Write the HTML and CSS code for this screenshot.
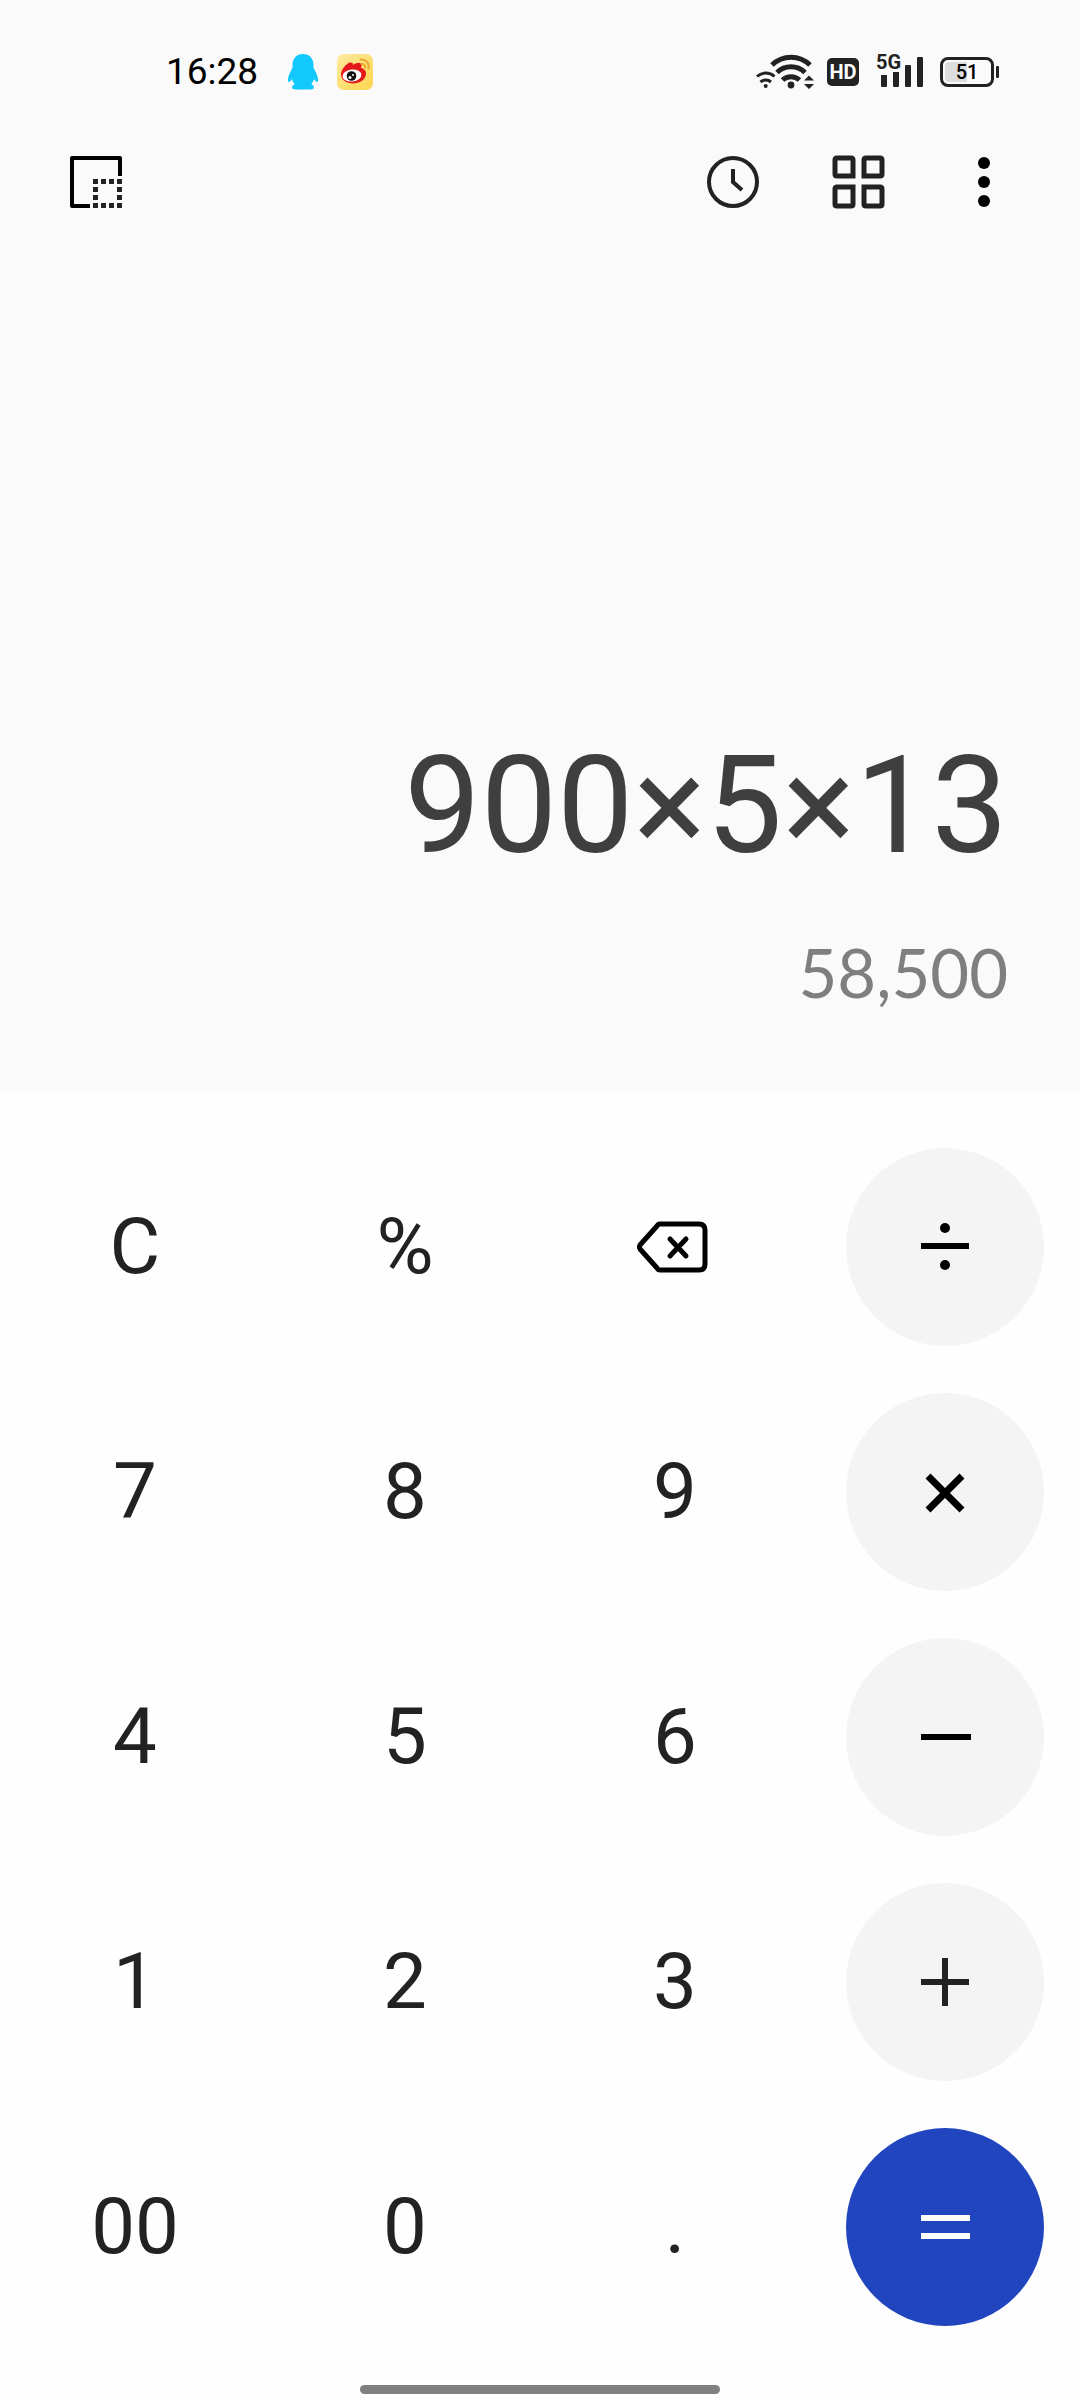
FILE: index.html
```html
<!DOCTYPE html>
<html lang="en">
<head>
    <meta charset="UTF-8">
    <meta name="viewport" content="width=device-width, initial-scale=1.0">
    <title>Calculator</title>
    <link rel="stylesheet" href="styles.css">
</head>
<body>
<div class="app">
    <div class="top">
        <div class="status-bar">
            <div class="status-left">
                <span class="time">16:28</span>
                <svg width="30" height="36" viewBox="0 0 30 36">
                    <path fill="#12c8fd" d="M15 0C8.500 0 4.500 4.500 4.500 11v3C2.500 17 .5 21 0 25c-.2 2 .4 3.500 1.600 2.800.8-.4 1.700-1.600 2.400-2.800.5 2 1.400 3.800 2.600 5.200C5 31 4 32 4 33.200 4 35.200 6.500 35.500 10 35.500h10c3.500 0 6-.3 6-2.300 0-1.200-1-2.200-2.600-3 1.200-1.400 2.100-3.200 2.600-5.200.7 1.200 1.600 2.400 2.400 2.800 1.200.7 1.800-.8 1.600-2.800-.5-4-2.500-8-4.500-11v-3C25.500 4.500 21.500 0 15 0z"/>
                </svg>
                <svg width="36" height="36" viewBox="0 0 36 36">
                    <defs>
                        <linearGradient id="weibo" x1="0" y1="0" x2="1" y2="1">
                            <stop offset="0" stop-color="#fdea9f"/>
                            <stop offset="1" stop-color="#fcd54e"/>
                        </linearGradient>
                    </defs>
                    <rect width="36" height="36" rx="7" fill="url(#weibo)"/>
                    <path fill="#e4181b" d="M4 20c0-4 5-10.500 9-11.500 2.500-.3 3.500 1 3 2.500 3-2.700 8-3.500 8.500 0 .1 1-.1 1.700-.5 3 3 .8 5.500 3 5 6C28.300 26 22.500 29.500 16 29.500S4 26 4 20z"/>
                    <ellipse cx="15" cy="21.500" rx="9.500" ry="6" fill="#fff" transform="rotate(-7 15 21.500)"/>
                    <circle cx="14.500" cy="22" r="4.800" fill="#111"/>
                    <circle cx="13" cy="23.500" r="1.500" fill="#fff"/>
                    <circle cx="16" cy="21" r="1" fill="#fff"/>
                    <path fill="none" stroke="#eba62f" stroke-width="2" stroke-linecap="round" d="M23.500 5.500c5-.8 9.200 3.500 8 9M24.500 10c2.500-.3 4 1.500 3.500 3.800"/>
                </svg>
            </div>
            <div class="status-right">
                <svg width="58" height="36" viewBox="0 0 58 36">
                    <g fill="none" stroke="#222" stroke-width="5">
                        <path d="M16 11a27 27 0 0 1 38 0"/>
                        <path d="M21 18.500a20 20 0 0 1 28 0"/>
                        <path d="M26.500 26a12.500 12.500 0 0 1 17 0"/>
                    </g>
                    <g fill="none" stroke="#222" stroke-width="3">
                        <path d="M1 22.500a13 13 0 0 1 17.500 0"/>
                        <path d="M4.500 28a8 8 0 0 1 10.500 0"/>
                    </g>
                    <circle cx="35" cy="31" r="3.400" fill="#222"/>
                    <circle cx="9.700" cy="32" r="2" fill="#222"/>
                    <path fill="#222" d="M53 21.500l5 5H48zM53 35l5-5H48z"/>
                </svg>
                <span class="hd">HD</span>
                <div class="signal">
                    <span class="network">5G</span>
                    <svg width="46" height="34" viewBox="0 0 46 34">
                        <path fill="#222" d="M3 20h6v11q0 1-1 1H4q-1 0-1-1zM15 17h6v14q0 1-1 1h-4q-1 0-1-1zM27 11q0-1 1-1h4q1 0 1 1v20q0 1-1 1h-4q-1 0-1-1zM39 3q0-1 1-1h4q1 0 1 1v28q0 1-1 1h-4q-1 0-1-1z"/>
                    </svg>
                </div>
                <div class="battery"><span class="level">51</span></div>
            </div>
        </div>

        <div class="toolbar">
            <button class="tool" aria-label="Floating window">
                <svg width="54" height="54" viewBox="0 0 54 54">
                    <path fill="none" stroke="#000" stroke-width="4" stroke-linejoin="round" d="M21 51H3V3h48v18"/>
                    <path fill="#222" d="M24 24h5v5h-5zM32 24h5v5h-5zM40 24h5v5h-5zM48 24h5v5h-5zM24 32h5v5h-5zM48 32h5v5h-5zM24 40h5v5h-5zM48 40h5v5h-5zM24 48h5v5h-5zM32 48h5v5h-5zM40 48h5v5h-5zM48 48h5v5h-5z"/>
                </svg>
            </button>
            <div class="toolbar-right">
                <button class="tool" aria-label="History">
                    <svg width="54" height="54" viewBox="0 0 54 54" fill="none" stroke="#222">
                        <circle cx="26" cy="27" r="24" stroke-width="4"/>
                        <path d="M26 14v13l9 8" stroke-width="4"/>
                    </svg>
                </button>
                <button class="tool" aria-label="Converters">
                    <svg width="54" height="54" viewBox="0 0 54 54" fill="none" stroke="#222" stroke-width="5">
                        <path d="M21 21H5q-2 0-2-2V5q0-2 2-2h14q2 0 2 2zM32 21V5q0-2 2-2h14q2 0 2 2v14q0 2-2 2zM21 32v17q0 2-2 2H5q-2 0-2-2V34q0-2 2-2zM32 32h16q2 0 2 2v15q0 2-2 2H34q-2 0-2-2z"/>
                    </svg>
                </button>
                <button class="tool" aria-label="More">
                    <svg width="54" height="54" viewBox="0 0 54 54">
                        <circle cx="27" cy="8" r="6"/>
                        <circle cx="27" cy="27" r="6"/>
                        <circle cx="27" cy="46" r="6"/>
                    </svg>
                </button>
            </div>
        </div>

        <div class="display">
            <div class="expression">900×5×13</div>
            <div class="result">58,500</div>
        </div>
    </div>

    <div class="keypad">
        <button class="key">C</button>
        <button class="key">%</button>
        <button class="key" aria-label="Backspace">
            <svg width="78" height="52" viewBox="0 0 78 52" fill="none" stroke="#000" stroke-linejoin="round" stroke-linecap="round">
                <path stroke-width="5" d="M24 3h39q6 0 6 6v34q0 6-6 6H24q-2 0-3-2L4 28q-1-2 0-4L21 5q1-2 3-2z"/>
                <path stroke-width="5" d="M34 18l16 17M50 18L34 35"/>
            </svg>
        </button>
        <button class="key operator" aria-label="Divide">
            <svg width="54" height="54" viewBox="0 0 54 54">
                <path stroke="#000" stroke-width="6" d="M3 26h48"/>
                <circle cx="27" cy="8" r="5"/>
                <circle cx="27" cy="45" r="5"/>
            </svg>
        </button>

        <button class="key">7</button>
        <button class="key">8</button>
        <button class="key">9</button>
        <button class="key operator" aria-label="Multiply">
            <svg width="54" height="54" viewBox="0 0 54 54" stroke="#000" stroke-width="7">
                <path d="M10 11l34 34M44 11L10 45"/>
            </svg>
        </button>

        <button class="key">4</button>
        <button class="key">5</button>
        <button class="key">6</button>
        <button class="key operator" aria-label="Subtract">
            <svg width="54" height="54" viewBox="0 0 54 54" stroke="#000" stroke-width="6">
                <path d="M3 27h50"/>
            </svg>
        </button>

        <button class="key">1</button>
        <button class="key">2</button>
        <button class="key">3</button>
        <button class="key operator" aria-label="Add">
            <svg width="54" height="54" viewBox="0 0 54 54" stroke="#222" stroke-width="6">
                <path d="M3 27h48M27 3v48"/>
            </svg>
        </button>

        <button class="key">00</button>
        <button class="key">0</button>
        <button class="key">.</button>
        <button class="key operator equals" aria-label="Equals">
            <svg width="54" height="54" viewBox="0 0 54 54" stroke="#fff" stroke-width="6">
                <path d="M3 18h49M3 36h49"/>
            </svg>
        </button>
    </div>

    <div class="nav-handle"></div>
</div>
</body>
</html>
```
FILE: styles.css
```css
:root {
    --panel: #fafafa;
    --keys: #fefefe;
    --dark: #222;
    --operator: #f4f4f4;
    --blue: #2145be;
}

* {
    margin: 0;
    padding: 0;
    box-sizing: border-box;
}

body {
    font-family: Roboto, "Liberation Sans", sans-serif;
    background: var(--keys);
    color: var(--dark);
}

svg {
    display: block;
}

button {
    border: none;
    background: none;
    font-family: inherit;
    color: inherit;
    cursor: pointer;
}

.app {
    min-height: 100vh;
    display: flex;
    flex-direction: column;
}

.top {
    flex: 1;
    display: flex;
    flex-direction: column;
    background: var(--panel);
}

/* Status bar */
.status-bar {
    display: flex;
    justify-content: space-between;
    align-items: center;
    padding: 52px 86px 0 166px;
}

.status-left {
    display: flex;
    align-items: center;
    gap: 19px;
}

.time {
    font-size: 37px;
    line-height: 40px;
    color: #000;
    margin-right: 11px;
}

.status-right {
    display: flex;
    align-items: center;
    gap: 13px;
}

.hd {
    width: 32px;
    height: 28px;
    border-radius: 5px;
    background: var(--dark);
    color: #fff;
    font-size: 20px;
    font-weight: 700;
    line-height: 28px;
    text-align: center;
}

.signal {
    position: relative;
    margin-left: 6px;
}

.network {
    position: absolute;
    top: -5px;
    left: -2px;
    font-size: 20px;
    font-weight: 700;
    line-height: 24px;
}

.battery {
    position: relative;
    width: 54px;
    height: 30px;
    margin-left: 3px;
    padding: 2px;
    border: 3px solid var(--dark);
    border-radius: 8px;
}

.battery::after {
    content: "";
    position: absolute;
    top: 6px;
    right: -8px;
    width: 3px;
    height: 12px;
    border-radius: 1px;
    background: var(--dark);
}

.level {
    display: block;
    background: linear-gradient(to right, #ddd 51%, transparent 51%);
    border-radius: 4px;
    color: #000;
    font-size: 20px;
    font-weight: 500;
    line-height: 20px;
    text-align: center;
}

/* Toolbar */
.toolbar {
    display: flex;
    justify-content: space-between;
    padding: 63px 69px 0;
}

.toolbar-right {
    display: flex;
    gap: 71px;
}

/* Display */
.display {
    flex: 1;
    display: flex;
    flex-direction: column;
    justify-content: flex-end;
    gap: 46px;
    padding: 0 72px 80px;
    text-align: right;
}

.expression {
    font-size: 136px;
    line-height: 160px;
    color: #3f3f3f;
}

.result {
    font-family: Lato, Roboto, sans-serif;
    font-size: 67px;
    line-height: 80px;
    color: #7f7f7f;
}

/* Keypad */
.keypad {
    display: grid;
    grid-template-columns: repeat(4, 1fr);
    justify-items: center;
    row-gap: 47px;
    padding: 56px 0 59px;
}

.key {
    display: flex;
    align-items: center;
    justify-content: center;
    width: 198px;
    height: 198px;
    border-radius: 50%;
    font-size: 78px;
    line-height: 92px;
}

.operator {
    background: var(--operator);
}

.equals {
    background: var(--blue);
}

.nav-handle {
    width: 33.333%;
    height: 9px;
    margin: 0 auto 6px;
    border-radius: 5px;
    background: #808080;
}
```
